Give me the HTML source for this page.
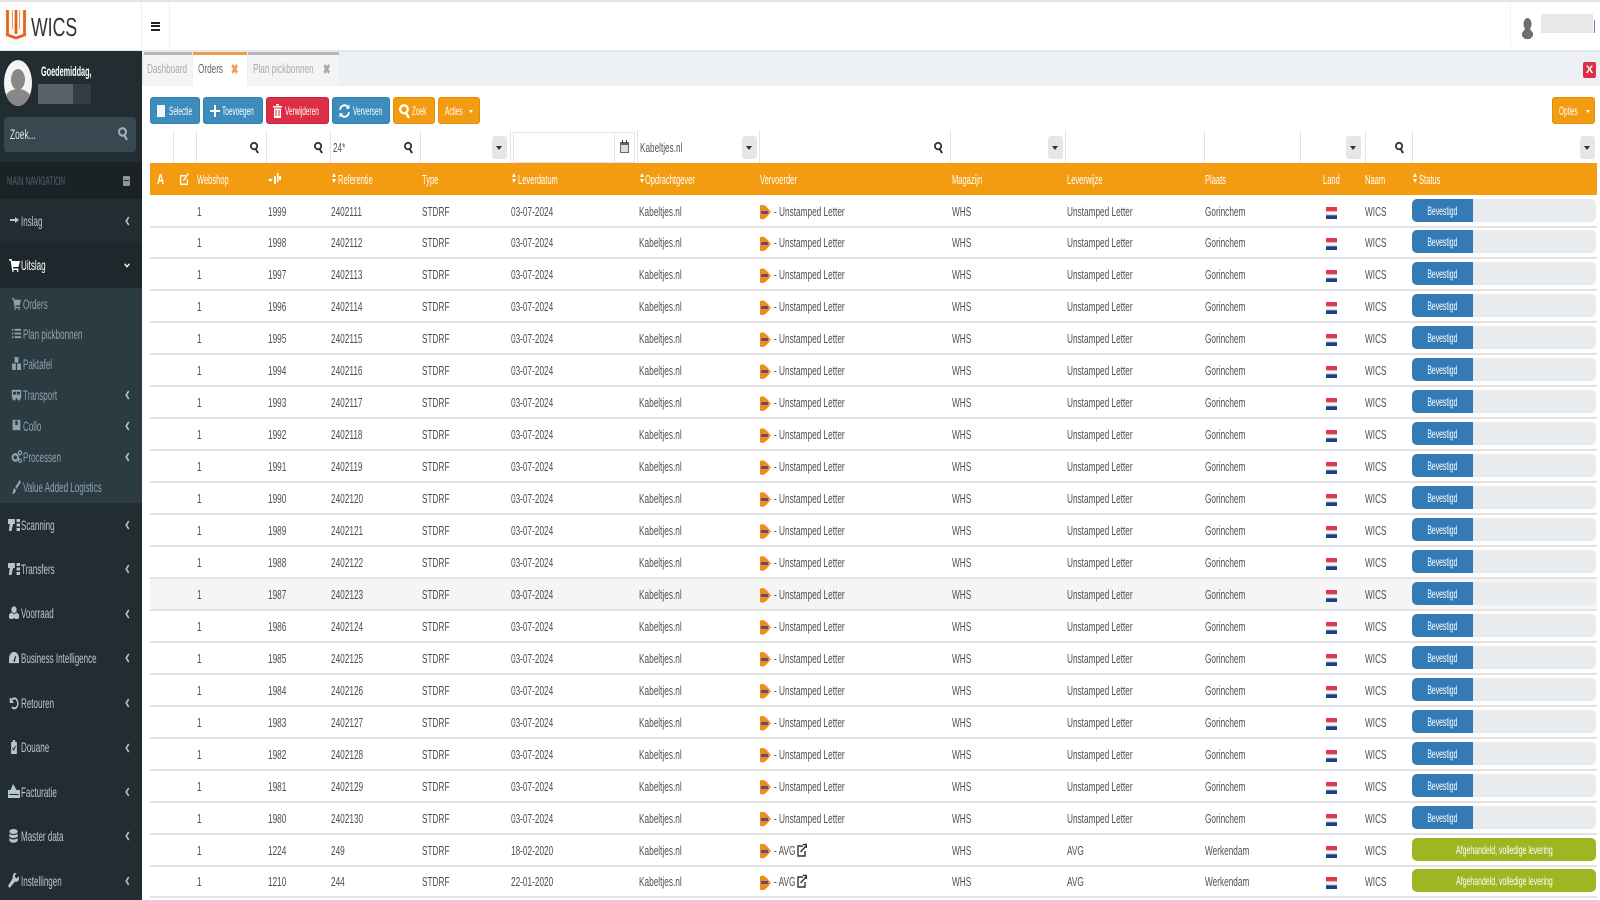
<!DOCTYPE html>
<html lang="nl"><head><meta charset="utf-8"><title>WICS</title>
<style>
*{box-sizing:border-box}
html{background:#fff}
html,body{margin:0;padding:0;width:1600px;height:900px;overflow:hidden;font-family:"Liberation Sans",sans-serif;font-size:13px;color:#555}
body{background:#fff;filter:blur(.3px)}
.a{position:absolute}
.t{position:absolute;white-space:nowrap;transform-origin:0 50%;transform:scaleX(.63)}
svg{position:absolute;display:block}
#side{position:absolute;left:0;top:51px;width:142px;height:849px;background:#222d32;overflow:hidden}
.m{position:absolute;left:21px;font-size:14px;line-height:20px;height:20px;margin-top:-10px;color:#b8c7ce;white-space:nowrap;transform-origin:0 50%;transform:scaleX(.575)}
.s{color:#8aa4af;left:23px}
.r{position:absolute;left:150px;width:1447px;height:32px;border-bottom:2px solid #e3e3e3;line-height:32px;color:#4f4f4f}
.r b{font-weight:normal;position:absolute;top:0;white-space:nowrap;transform-origin:0 50%;transform:scaleX(.635)}
.r b:nth-child(1){left:47px}.r b:nth-child(2){left:118px}.r b:nth-child(3){left:181px}.r b:nth-child(4){left:272px}
.r b:nth-child(5){left:361px}.r b:nth-child(6){left:489px}
.r u{position:absolute;left:610px;top:9px;width:11px;height:15px;background:#f28b1e;clip-path:polygon(0 5%,30% 0,60% 15%,100% 50%,60% 85%,30% 100%,0 95%);text-decoration:none}
.r u:after{content:"";position:absolute;left:1px;top:6px;width:7px;height:3px;background:#6a4a70}
.r b:nth-child(8){left:624px}.r b:nth-child(9){left:802px}.r b:nth-child(10){left:917px}.r b:nth-child(11){left:1055px}
.r s{position:absolute;left:1176px;top:11px;width:11px;height:12px;background:linear-gradient(#e0354a 0 30%,#f4f4f4 42% 62%,#1c3f86 74%)}
.r b:nth-child(13){left:1215px}
.r em{position:absolute;left:1262px;top:3px;width:61px;height:23px;background:#337ab7;border-radius:5px 0 0 5px;font-style:normal;color:#fff;font-size:12px;line-height:25px;text-align:center}
.r em span{display:inline-block;transform:scaleX(.57)}
.r q{position:absolute;left:1323px;top:3px;width:123px;height:23px;background:#e9ecef;border-radius:0 5px 5px 0;quotes:none}
.r i{position:absolute;left:1262px;top:3px;width:184px;height:23px;background:#9db722;border-radius:5px;font-style:normal;color:#fff;font-size:12px;line-height:25px;text-align:center}
.r i span{display:inline-block;transform:scaleX(.58)}
.h{position:absolute;top:164px;line-height:32px;height:32px;color:#fff;white-space:nowrap;transform-origin:0 50%;transform:scaleX(.58)}
.btn{position:absolute;top:97px;height:27px;border-radius:3px;border:1px solid #367fa9;background:#3c8dbc;color:#fff}
.btn span{position:absolute;top:0;line-height:27px;font-size:12px;white-space:nowrap;transform-origin:0 50%;transform:scaleX(.54)}
.o{background:#f39c12;border-color:#e08e0b}
.v{position:absolute;top:130px;width:1px;height:33px;background:#e4e4e4}
.c{position:absolute;top:136px;width:15px;height:23px;background:#e6e6e6;border-radius:3px}
.c:after{content:"";position:absolute;left:4px;top:10px;border:3.5px solid transparent;border-top:4px solid #333;border-bottom:0}
.ar{position:absolute;top:173px;width:5px;height:12px}
.ar:before{content:"";position:absolute;left:0;top:0;border:2.5px solid transparent;border-bottom:4px solid #fff;border-top:0}
.ar:after{content:"";position:absolute;left:0;top:6px;border:2.5px solid transparent;border-top:4px solid #fff;border-bottom:0}
</style></head><body>
<svg width="0" height="0">
<defs>
<symbol id="sr" viewBox="0 0 10 14" preserveAspectRatio="none"><circle cx="4.500" cy="5.500" r="3.500" fill="none" stroke="currentColor" stroke-width="2"/><path d="M6.500 9L9 13" stroke="currentColor" stroke-width="2.200" fill="none"/></symbol>
<symbol id="ch" viewBox="0 0 6 10" preserveAspectRatio="none"><path d="M4.500 1L1.500 5l3 4" fill="none" stroke="currentColor" stroke-width="1.800"/></symbol>
<symbol id="cart" viewBox="0 0 14 14" preserveAspectRatio="none"><path d="M0 1h3l1 2h10l-2 6H5l.3 1.500H12V12H4L2 2.500H0z" fill="currentColor"/><circle cx="5" cy="13" r="1" fill="currentColor"/><circle cx="11" cy="13" r="1" fill="currentColor"/></symbol>
<symbol id="list" viewBox="0 0 14 14" preserveAspectRatio="none"><path d="M0 2h2v2H0zM4 2h10v2H4zM0 6h2v2H0zM4 6h10v2H4zM0 10h2v2H0zM4 10h10v2H4z" fill="currentColor"/></symbol>
<symbol id="box" viewBox="0 0 14 14" preserveAspectRatio="none"><path d="M4 0h6v6H4zM0 7h6v7H0zM8 7h6v7H8z" fill="currentColor"/></symbol>
<symbol id="bus" viewBox="0 0 14 14" preserveAspectRatio="none"><path d="M1 2h12v9H1z" fill="currentColor"/><path d="M2.500 4h4v3h-4zM7.500 4h4v3h-4z" fill="#2c3b41"/><circle cx="4" cy="11.500" r="2" fill="currentColor"/><circle cx="10" cy="11.500" r="2" fill="currentColor"/></symbol>
<symbol id="col" viewBox="0 0 14 14" preserveAspectRatio="none"><path d="M1 1h12v12H1z" fill="currentColor"/><path d="M5 2h4v5H5z" fill="#2c3b41"/></symbol>
<symbol id="gear" viewBox="0 0 14 14" preserveAspectRatio="none"><circle cx="5.500" cy="8" r="3.500" fill="none" stroke="currentColor" stroke-width="2.500"/><circle cx="11.500" cy="3" r="2" fill="none" stroke="currentColor" stroke-width="1.500"/><circle cx="11.500" cy="11.500" r="1.800" fill="none" stroke="currentColor" stroke-width="1.300"/></symbol>
<symbol id="brush" viewBox="0 0 14 14" preserveAspectRatio="none"><path d="M12 0l2 2-7 7-2-2zM4 8l2 2c0 3-3 4-6 4 2-1 1-5 4-6z" fill="currentColor"/></symbol>
<symbol id="scan" viewBox="0 0 14 14" preserveAspectRatio="none"><path d="M0 1h8v5H6l-2 7H1l1-7H0z" fill="currentColor"/><path d="M10 1h4v3h-4zM10 5.500h4v3h-4zM10 10h4v3h-4z" fill="currentColor"/></symbol>
<symbol id="cube" viewBox="0 0 14 14" preserveAspectRatio="none"><path d="M7 0l3.500 2v4L7 8 3.500 6V2zM3.500 7L7 9v4l-3.500 1.500L0 13V9zM10.500 7L14 9v4l-3.500 1.500L7 13V9z" fill="currentColor"/></symbol>
<symbol id="gauge" viewBox="0 0 14 14" preserveAspectRatio="none"><path d="M7 1a7 7 0 0 1 7 7v5H0V8a7 7 0 0 1 7-7z" fill="currentColor"/><path d="M6 11l3-6 1 1-2 6z" fill="#222d32"/></symbol>
<symbol id="undo" viewBox="0 0 14 14" preserveAspectRatio="none"><path d="M3 5a5 5 0 1 1 1 6" fill="none" stroke="currentColor" stroke-width="2"/><path d="M1 1v6h6z" fill="currentColor"/></symbol>
<symbol id="clip" viewBox="0 0 14 14" preserveAspectRatio="none"><path d="M2 2h3V0h4v2h3v12H2z" fill="currentColor"/><path d="M4.500 8l2 2 3-4" fill="none" stroke="#222d32" stroke-width="1.500"/></symbol>
<symbol id="inv" viewBox="0 0 14 14" preserveAspectRatio="none"><path d="M0 6h3l3-6 4 6h4v8H0z" fill="currentColor"/><path d="M1.500 10h11v1h-11z" fill="#222d32"/></symbol>
<symbol id="db" viewBox="0 0 14 14" preserveAspectRatio="none"><ellipse cx="7" cy="2.500" rx="6.500" ry="2.500" fill="currentColor"/><path d="M.5 4.500c2 2 11 2 13 0v3c-2 2-11 2-13 0zM.5 9c2 2 11 2 13 0v2.500c-2 3-11 3-13 0z" fill="currentColor"/></symbol>
<symbol id="wr" viewBox="0 0 14 14" preserveAspectRatio="none"><path d="M14 3l-3 2-2-1V2l2-2c-3-1-5 1-5 4v1L0 12l2 2 7-6c3 1 6-1 5-5z" fill="currentColor"/></symbol>
</defs></svg>

<!-- top -->
<div class="a" style="left:0;top:0;width:1600px;height:2px;background:#e4e4e4"></div>
<div class="a" style="left:0;top:50px;width:1600px;height:2px;background:#e4e7eb"></div>
<div class="a" style="left:141px;top:2px;width:1px;height:48px;background:#eee"></div>
<div class="a" style="left:169px;top:2px;width:1px;height:48px;background:#eee"></div>
<div class="a" style="left:3px;top:5px;width:26px;height:42px;background:#fafafa;border-radius:4px 4px 13px 13px"></div>
<svg style="left:5px;top:8px" width="22" height="33" viewBox="0 0 22 33"><path d="M2.500 2v25l8.500 3 8.500-3V2M11 2v24" fill="none" stroke="#e8641a" stroke-width="2.800"/><path d="M7.500 2v19M14.500 2v19" fill="none" stroke="#f19a5c" stroke-width="1"/></svg>
<div class="t" style="left:31px;top:12px;font-size:26px;line-height:30px;color:#333;transform:scaleX(.68)">WICS</div>
<div class="a" style="left:151px;top:22px;width:9px;height:2px;background:#222"></div>
<div class="a" style="left:151px;top:25px;width:9px;height:2px;background:#222"></div>
<div class="a" style="left:151px;top:29px;width:9px;height:2px;background:#222"></div>
<div class="a" style="left:1510px;top:5px;width:1px;height:41px;background:#f0f0f0"></div>
<svg style="left:1522px;top:18px;color:#6f6f6f" width="11" height="21" viewBox="0 0 11 21"><ellipse cx="5.500" cy="6" rx="4" ry="6" fill="currentColor"/><path d="M3 11h5l3 4v3l-3 3H3l-3-3v-3z" fill="currentColor"/></svg>
<div class="a" style="left:1541px;top:14px;width:52px;height:19px;background:#e8e8e8"></div>
<div class="a" style="left:1594px;top:20px;width:1px;height:13px;background:#5b7fc0"></div>

<!-- tabs -->
<div class="a" style="left:142px;top:52px;width:1458px;height:34px;background:#ecf0f5"></div>
<div class="a" style="left:144px;top:52px;width:48px;height:34px;background:#f4f4f4;border-top:3px solid #b5b5b5"></div>
<div class="a" style="left:193px;top:52px;width:54px;height:34px;background:#fff;border-top:3px solid #f39b4d"></div>
<div class="a" style="left:248px;top:52px;width:91px;height:34px;background:#f4f4f4;border-top:3px solid #b5b5b5"></div>
<div class="t" style="left:147px;top:61px;line-height:16px;color:#aaa">Dashboard</div>
<div class="t" style="left:198px;top:61px;line-height:16px;color:#666">Orders</div>
<div class="t" style="left:231px;top:61px;line-height:16px;color:#f39b4d;font-weight:bold;font-size:14px">✖</div>
<div class="t" style="left:253px;top:61px;line-height:16px;color:#aaa">Plan pickbonnen</div>
<div class="t" style="left:323px;top:61px;line-height:16px;color:#aaa;font-weight:bold;font-size:14px">✖</div>
<div class="a" style="left:1583px;top:62px;width:13px;height:16px;background:#dc2f45;border-radius:2px;color:#fff;font-weight:bold;font-size:11px;line-height:16px;text-align:center">X</div>

<!-- toolbar -->
<div class="btn" style="left:150px;width:50px"><div class="a" style="left:6px;top:7px;width:8px;height:12px;background:#f4f4f4"></div><span style="left:18px">Selectie</span></div>
<div class="btn" style="left:203px;width:60px"><div class="a" style="left:6px;top:12px;width:10px;height:2px;background:#fff"></div><div class="a" style="left:10px;top:7px;width:2px;height:12px;background:#fff"></div><span style="left:18px">Toevoegen</span></div>
<div class="btn" style="left:266px;width:63px;background:#dc2f45;border-color:#c9243a"><svg style="left:6px;top:6px" width="9" height="14" viewBox="0 0 9 14"><path d="M0 2h9v1.500H0zM3 0h3v1.500H3zM1 4.500h7V14H1z" fill="#fff"/><path d="M3 6v6M6 6v6" stroke="#dc2f45"/></svg><span style="left:18px">Verwijderen</span></div>
<div class="btn" style="left:332px;width:58px"><svg style="left:6px;top:5px;color:#fff" width="11" height="16" viewBox="0 0 11 14" preserveAspectRatio="none"><path d="M1 6a4.500 5 0 0 1 8-2M10 8a4.500 5 0 0 1-8 2" fill="none" stroke="currentColor" stroke-width="1.800"/><path d="M10.500 1v4h-3.500zM.5 13V9h3.500z" fill="currentColor"/></svg><span style="left:20px">Verversen</span></div>
<div class="btn o" style="left:393px;width:42px"><svg style="left:5px;top:5px;color:#fff" width="11" height="16"><use href="#sr"/></svg><span style="left:18px">Zoek</span></div>
<div class="btn o" style="left:438px;width:42px"><span style="left:6px">Acties</span><div class="a" style="left:30px;top:12px;border:2px solid transparent;border-top:3px solid #fff;border-bottom:0"></div></div>
<div class="btn o" style="left:1552px;width:43px"><span style="left:6px">Opties</span><div class="a" style="left:33px;top:12px;border:2px solid transparent;border-top:3px solid #fff;border-bottom:0"></div></div>

<!-- filter row -->
<div class="v" style="left:173px"></div><div class="v" style="left:196px"></div><div class="v" style="left:266px"></div><div class="v" style="left:330px"></div><div class="v" style="left:420px"></div><div class="v" style="left:510px"></div><div class="v" style="left:637px"></div><div class="v" style="left:759px"></div><div class="v" style="left:950px"></div><div class="v" style="left:1065px"></div><div class="v" style="left:1204px"></div><div class="v" style="left:1300px"></div><div class="v" style="left:1365px"></div><div class="v" style="left:1412px"></div>
<svg style="left:250px;top:141px;color:#333" width="9" height="13"><use href="#sr"/></svg>
<svg style="left:314px;top:141px;color:#333" width="9" height="13"><use href="#sr"/></svg>
<svg style="left:404px;top:141px;color:#333" width="9" height="13"><use href="#sr"/></svg>
<svg style="left:934px;top:141px;color:#333" width="9" height="13"><use href="#sr"/></svg>
<svg style="left:1395px;top:141px;color:#333" width="9" height="13"><use href="#sr"/></svg>
<div class="t" style="left:333px;top:140px;line-height:16px">24*</div>
<div class="c" style="left:492px"></div><div class="c" style="left:742px"></div><div class="c" style="left:1048px"></div><div class="c" style="left:1346px"></div><div class="c" style="left:1580px"></div>
<div class="a" style="left:513px;top:132px;width:122px;height:31px;border:1px solid #e4e4e4"></div>
<div class="a" style="left:614px;top:132px;width:1px;height:31px;background:#e4e4e4"></div>
<svg style="left:620px;top:140px" width="9" height="13" viewBox="0 0 9 13"><path d="M0 2h9v11H0z" fill="#666"/><path d="M1 5h7v7H1z" fill="#ddd"/><path d="M2 0h1v3H2zM6 0h1v3H6z" fill="#333"/></svg>
<div class="t" style="left:640px;top:140px;line-height:16px">Kabeltjes.nl</div>

<!-- header -->
<div class="a" style="left:150px;top:163px;width:1447px;height:32px;background:#f39c12"></div>
<div class="h" style="left:157px;font-weight:bold;font-size:15px;transform:scaleX(.65)">A</div>
<svg style="left:180px;top:173px" width="9" height="12" viewBox="0 0 9 12"><path d="M0 2h6L5 3.500H1.200v7h5.600V7L8 6v6H0z" fill="#fff"/><path d="M4 8l5-7-1-1-5 7z" fill="#fff"/></svg>
<div class="h" style="left:197px">Webshop</div>
<svg style="left:268px;top:173px" width="13" height="12" viewBox="0 0 13 12"><path d="M0 6h5L2.500 9z" fill="#fff"/><path d="M6 3h2v8H6zM9 0h1.500v9H9zM11 3h2v4h-2z" fill="#fff"/></svg>
<div class="ar" style="left:332px"></div><div class="h" style="left:338px">Referentie</div>
<div class="h" style="left:422px">Type</div>
<div class="ar" style="left:512px"></div><div class="h" style="left:518px">Leverdatum</div>
<div class="ar" style="left:640px"></div><div class="h" style="left:645px">Opdrachtgever</div>
<div class="h" style="left:760px">Vervoerder</div>
<div class="h" style="left:952px">Magazijn</div>
<div class="h" style="left:1067px">Leverwijze</div>
<div class="h" style="left:1205px">Plaats</div>
<div class="h" style="left:1323px">Land</div>
<div class="h" style="left:1365px">Naam</div>
<div class="ar" style="left:1413px"></div><div class="h" style="left:1419px">Status</div>

<!-- rows -->
<div class="r" style="top:195.5px"><b>1</b><b>1999</b><b>2402111</b><b>STDRF</b><b>03-07-2024</b><b>Kabeltjes.nl</b><u></u><b>- Unstamped Letter</b><b>WHS</b><b>Unstamped Letter</b><b>Gorinchem</b><s></s><b>WICS</b><em><span>Bevestigd</span></em><q></q></div>
<div class="r" style="top:227.45px"><b>1</b><b>1998</b><b>2402112</b><b>STDRF</b><b>03-07-2024</b><b>Kabeltjes.nl</b><u></u><b>- Unstamped Letter</b><b>WHS</b><b>Unstamped Letter</b><b>Gorinchem</b><s></s><b>WICS</b><em><span>Bevestigd</span></em><q></q></div>
<div class="r" style="top:259.4px"><b>1</b><b>1997</b><b>2402113</b><b>STDRF</b><b>03-07-2024</b><b>Kabeltjes.nl</b><u></u><b>- Unstamped Letter</b><b>WHS</b><b>Unstamped Letter</b><b>Gorinchem</b><s></s><b>WICS</b><em><span>Bevestigd</span></em><q></q></div>
<div class="r" style="top:291.35px"><b>1</b><b>1996</b><b>2402114</b><b>STDRF</b><b>03-07-2024</b><b>Kabeltjes.nl</b><u></u><b>- Unstamped Letter</b><b>WHS</b><b>Unstamped Letter</b><b>Gorinchem</b><s></s><b>WICS</b><em><span>Bevestigd</span></em><q></q></div>
<div class="r" style="top:323.3px"><b>1</b><b>1995</b><b>2402115</b><b>STDRF</b><b>03-07-2024</b><b>Kabeltjes.nl</b><u></u><b>- Unstamped Letter</b><b>WHS</b><b>Unstamped Letter</b><b>Gorinchem</b><s></s><b>WICS</b><em><span>Bevestigd</span></em><q></q></div>
<div class="r" style="top:355.25px"><b>1</b><b>1994</b><b>2402116</b><b>STDRF</b><b>03-07-2024</b><b>Kabeltjes.nl</b><u></u><b>- Unstamped Letter</b><b>WHS</b><b>Unstamped Letter</b><b>Gorinchem</b><s></s><b>WICS</b><em><span>Bevestigd</span></em><q></q></div>
<div class="r" style="top:387.2px"><b>1</b><b>1993</b><b>2402117</b><b>STDRF</b><b>03-07-2024</b><b>Kabeltjes.nl</b><u></u><b>- Unstamped Letter</b><b>WHS</b><b>Unstamped Letter</b><b>Gorinchem</b><s></s><b>WICS</b><em><span>Bevestigd</span></em><q></q></div>
<div class="r" style="top:419.15px"><b>1</b><b>1992</b><b>2402118</b><b>STDRF</b><b>03-07-2024</b><b>Kabeltjes.nl</b><u></u><b>- Unstamped Letter</b><b>WHS</b><b>Unstamped Letter</b><b>Gorinchem</b><s></s><b>WICS</b><em><span>Bevestigd</span></em><q></q></div>
<div class="r" style="top:451.1px"><b>1</b><b>1991</b><b>2402119</b><b>STDRF</b><b>03-07-2024</b><b>Kabeltjes.nl</b><u></u><b>- Unstamped Letter</b><b>WHS</b><b>Unstamped Letter</b><b>Gorinchem</b><s></s><b>WICS</b><em><span>Bevestigd</span></em><q></q></div>
<div class="r" style="top:483.05px"><b>1</b><b>1990</b><b>2402120</b><b>STDRF</b><b>03-07-2024</b><b>Kabeltjes.nl</b><u></u><b>- Unstamped Letter</b><b>WHS</b><b>Unstamped Letter</b><b>Gorinchem</b><s></s><b>WICS</b><em><span>Bevestigd</span></em><q></q></div>
<div class="r" style="top:515px"><b>1</b><b>1989</b><b>2402121</b><b>STDRF</b><b>03-07-2024</b><b>Kabeltjes.nl</b><u></u><b>- Unstamped Letter</b><b>WHS</b><b>Unstamped Letter</b><b>Gorinchem</b><s></s><b>WICS</b><em><span>Bevestigd</span></em><q></q></div>
<div class="r" style="top:546.95px"><b>1</b><b>1988</b><b>2402122</b><b>STDRF</b><b>03-07-2024</b><b>Kabeltjes.nl</b><u></u><b>- Unstamped Letter</b><b>WHS</b><b>Unstamped Letter</b><b>Gorinchem</b><s></s><b>WICS</b><em><span>Bevestigd</span></em><q></q></div>
<div class="r" style="top:578.9px;background:#f5f5f5"><b>1</b><b>1987</b><b>2402123</b><b>STDRF</b><b>03-07-2024</b><b>Kabeltjes.nl</b><u></u><b>- Unstamped Letter</b><b>WHS</b><b>Unstamped Letter</b><b>Gorinchem</b><s></s><b>WICS</b><em><span>Bevestigd</span></em><q></q></div>
<div class="r" style="top:610.85px"><b>1</b><b>1986</b><b>2402124</b><b>STDRF</b><b>03-07-2024</b><b>Kabeltjes.nl</b><u></u><b>- Unstamped Letter</b><b>WHS</b><b>Unstamped Letter</b><b>Gorinchem</b><s></s><b>WICS</b><em><span>Bevestigd</span></em><q></q></div>
<div class="r" style="top:642.8px"><b>1</b><b>1985</b><b>2402125</b><b>STDRF</b><b>03-07-2024</b><b>Kabeltjes.nl</b><u></u><b>- Unstamped Letter</b><b>WHS</b><b>Unstamped Letter</b><b>Gorinchem</b><s></s><b>WICS</b><em><span>Bevestigd</span></em><q></q></div>
<div class="r" style="top:674.75px"><b>1</b><b>1984</b><b>2402126</b><b>STDRF</b><b>03-07-2024</b><b>Kabeltjes.nl</b><u></u><b>- Unstamped Letter</b><b>WHS</b><b>Unstamped Letter</b><b>Gorinchem</b><s></s><b>WICS</b><em><span>Bevestigd</span></em><q></q></div>
<div class="r" style="top:706.7px"><b>1</b><b>1983</b><b>2402127</b><b>STDRF</b><b>03-07-2024</b><b>Kabeltjes.nl</b><u></u><b>- Unstamped Letter</b><b>WHS</b><b>Unstamped Letter</b><b>Gorinchem</b><s></s><b>WICS</b><em><span>Bevestigd</span></em><q></q></div>
<div class="r" style="top:738.65px"><b>1</b><b>1982</b><b>2402128</b><b>STDRF</b><b>03-07-2024</b><b>Kabeltjes.nl</b><u></u><b>- Unstamped Letter</b><b>WHS</b><b>Unstamped Letter</b><b>Gorinchem</b><s></s><b>WICS</b><em><span>Bevestigd</span></em><q></q></div>
<div class="r" style="top:770.6px"><b>1</b><b>1981</b><b>2402129</b><b>STDRF</b><b>03-07-2024</b><b>Kabeltjes.nl</b><u></u><b>- Unstamped Letter</b><b>WHS</b><b>Unstamped Letter</b><b>Gorinchem</b><s></s><b>WICS</b><em><span>Bevestigd</span></em><q></q></div>
<div class="r" style="top:802.55px"><b>1</b><b>1980</b><b>2402130</b><b>STDRF</b><b>03-07-2024</b><b>Kabeltjes.nl</b><u></u><b>- Unstamped Letter</b><b>WHS</b><b>Unstamped Letter</b><b>Gorinchem</b><s></s><b>WICS</b><em><span>Bevestigd</span></em><q></q></div>
<div class="r" style="top:834.5px"><b>1</b><b>1224</b><b>249</b><b>STDRF</b><b>18-02-2020</b><b>Kabeltjes.nl</b><u></u><b>- AVG</b><b>WHS</b><b>AVG</b><b>Werkendam</b><s></s><b>WICS</b><i><span>Afgehandeld, volledige levering</span></i><svg style="left:647px;top:8px" width="10" height="14" viewBox="0 0 10 14"><path d="M6 3H1v10h7V8" fill="none" stroke="#333" stroke-width="1.400"/><path d="M3.500 9L9 3M6 1.500h3.500V5" fill="none" stroke="#333" stroke-width="1.400"/></svg></div>
<div class="r" style="top:866.45px"><b>1</b><b>1210</b><b>244</b><b>STDRF</b><b>22-01-2020</b><b>Kabeltjes.nl</b><u></u><b>- AVG</b><b>WHS</b><b>AVG</b><b>Werkendam</b><s></s><b>WICS</b><i><span>Afgehandeld, volledige levering</span></i><svg style="left:647px;top:8px" width="10" height="14" viewBox="0 0 10 14"><path d="M6 3H1v10h7V8" fill="none" stroke="#333" stroke-width="1.400"/><path d="M3.500 9L9 3M6 1.500h3.500V5" fill="none" stroke="#333" stroke-width="1.400"/></svg></div>

<!-- sidebar -->
<div id="side">
<div class="a" style="left:4px;top:9px;width:28px;height:46px;border-radius:50%;background:#f4f4f4;overflow:hidden"><div class="a" style="left:7px;top:9px;width:14px;height:21px;border-radius:50%;background:#888"></div><div class="a" style="left:1px;top:29px;width:26px;height:20px;border-radius:50%;background:#888"></div></div>
<div class="t" style="left:41px;top:11px;line-height:18px;color:#fff;font-weight:bold;font-size:14px;transform:scaleX(.52)">Goedemiddag,</div>
<div class="a" style="left:38px;top:33px;width:35px;height:20px;background:#596267"></div>
<div class="a" style="left:73px;top:33px;width:18px;height:20px;background:#333e44"></div>
<div class="a" style="left:4px;top:66px;width:132px;height:35px;background:#374850;border-radius:3px"></div>
<div class="t" style="left:10px;top:74px;line-height:18px;color:#e5e5e5;font-size:14px;transform:scaleX(.6)">Zoek...</div>
<svg style="left:118px;top:75px;color:#aab" width="10" height="15"><use href="#sr"/></svg>
<div class="a" style="left:0;top:111px;width:142px;height:37px;background:#1a2226"></div>
<div class="t" style="left:7px;top:121px;line-height:18px;color:#4b646f;font-size:12px;transform:scaleX(.55)">MAIN NAVIGATION</div>
<div class="a" style="left:123px;top:125px;width:7px;height:10px;background:#8a989e;border-radius:1px"></div>
<div class="a" style="left:124px;top:129px;width:5px;height:1px;background:#222d32"></div>
<div class="a" style="left:0;top:192px;width:142px;height:45px;background:#1e282c"></div>
<div class="a" style="left:0;top:237px;width:142px;height:215px;background:#2c3b41"></div>

<div class="m" style="top:170px">Inslag</div>
<div class="a" style="left:10px;top:168px;width:8px;height:2px;background:#b8c7ce"></div>
<div class="a" style="left:15px;top:166px;border:3px solid transparent;border-left:4px solid #b8c7ce;border-right:0"></div>
<svg style="left:9px;top:207px;color:#fff" width="11" height="14"><use href="#cart"/></svg><div class="m" style="top:214px;color:#fff">Uitslag</div>

<svg style="left:12px;top:246px;color:#8aa4af" width="9" height="13"><use href="#cart"/></svg><div class="m s" style="top:253px">Orders</div>
<svg style="left:12px;top:276px;color:#8aa4af" width="9" height="13"><use href="#list"/></svg><div class="m s" style="top:283px">Plan pickbonnen</div>
<svg style="left:12px;top:306px;color:#8aa4af" width="9" height="13"><use href="#box"/></svg><div class="m s" style="top:313px">Paktafel</div>
<svg style="left:11px;top:337px;color:#8aa4af" width="11" height="13"><use href="#bus"/></svg><div class="m s" style="top:344px">Transport</div>
<svg style="left:12px;top:368px;color:#8aa4af" width="9" height="12"><use href="#col"/></svg><div class="m s" style="top:375px">Collo</div>
<svg style="left:11px;top:399px;color:#8aa4af" width="11" height="13"><use href="#gear"/></svg><div class="m s" style="top:406px">Processen</div>
<svg style="left:12px;top:429px;color:#8aa4af" width="9" height="14"><use href="#brush"/></svg><div class="m s" style="top:436px">Value Added Logistics</div>

<svg style="left:8px;top:467px;color:#b8c7ce" width="12" height="14"><use href="#scan"/></svg><div class="m" style="top:474px">Scanning</div>
<svg style="left:8px;top:511px;color:#b8c7ce" width="12" height="14"><use href="#scan"/></svg><div class="m" style="top:518px">Transfers</div>
<svg style="left:9px;top:555px;color:#b8c7ce" width="10" height="13"><use href="#cube"/></svg><div class="m" style="top:562px">Voorraad</div>
<svg style="left:9px;top:600px;color:#b8c7ce" width="10" height="13"><use href="#gauge"/></svg><div class="m" style="top:607px">Business Intelligence</div>
<svg style="left:9px;top:645px;color:#b8c7ce" width="10" height="14"><use href="#undo"/></svg><div class="m" style="top:652px">Retouren</div>
<svg style="left:10px;top:689px;color:#b8c7ce" width="8" height="14"><use href="#clip"/></svg><div class="m" style="top:696px">Douane</div>
<svg style="left:8px;top:733px;color:#b8c7ce" width="12" height="14"><use href="#inv"/></svg><div class="m" style="top:741px">Facturatie</div>
<svg style="left:9px;top:778px;color:#b8c7ce" width="9" height="14"><use href="#db"/></svg><div class="m" style="top:785px">Master data</div>
<svg style="left:8px;top:822px;color:#b8c7ce" width="11" height="15"><use href="#wr"/></svg><div class="m" style="top:830px">Instellingen</div>

<svg style="left:125px;top:165px;color:#b8c7ce" width="5" height="10"><use href="#ch"/></svg>
<svg style="left:124px;top:212px" width="6" height="5" viewBox="0 0 9 6" preserveAspectRatio="none"><path d="M1 1l3.500 3.500L8 1" fill="none" stroke="#fff" stroke-width="1.800"/></svg>
<svg style="left:125px;top:339px;color:#b8c7ce" width="5" height="10"><use href="#ch"/></svg>
<svg style="left:125px;top:370px;color:#b8c7ce" width="5" height="10"><use href="#ch"/></svg>
<svg style="left:125px;top:401px;color:#b8c7ce" width="5" height="10"><use href="#ch"/></svg>
<svg style="left:125px;top:469px;color:#b8c7ce" width="5" height="10"><use href="#ch"/></svg>
<svg style="left:125px;top:513px;color:#b8c7ce" width="5" height="10"><use href="#ch"/></svg>
<svg style="left:125px;top:558px;color:#b8c7ce" width="5" height="10"><use href="#ch"/></svg>
<svg style="left:125px;top:602px;color:#b8c7ce" width="5" height="10"><use href="#ch"/></svg>
<svg style="left:125px;top:647px;color:#b8c7ce" width="5" height="10"><use href="#ch"/></svg>
<svg style="left:125px;top:692px;color:#b8c7ce" width="5" height="10"><use href="#ch"/></svg>
<svg style="left:125px;top:736px;color:#b8c7ce" width="5" height="10"><use href="#ch"/></svg>
<svg style="left:125px;top:780px;color:#b8c7ce" width="5" height="10"><use href="#ch"/></svg>
<svg style="left:125px;top:825px;color:#b8c7ce" width="5" height="10"><use href="#ch"/></svg>
</div>
</body></html>
